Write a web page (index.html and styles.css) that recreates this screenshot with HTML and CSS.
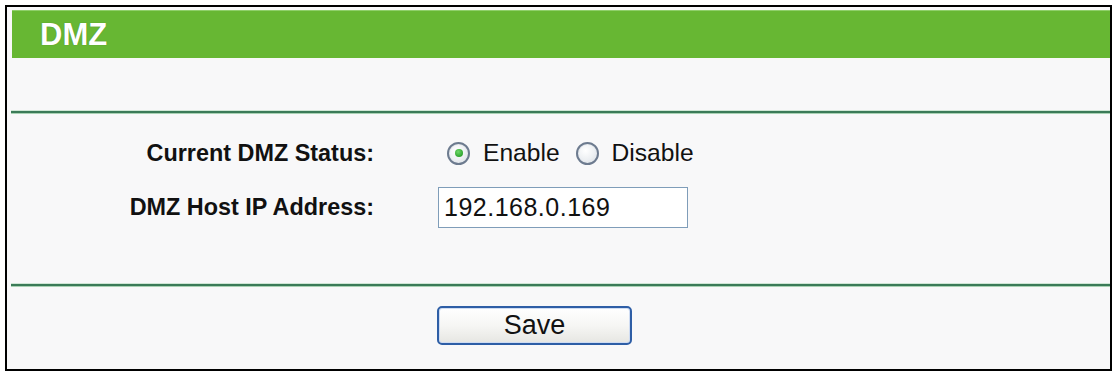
FILE: index.html
```html
<!DOCTYPE html>
<html>
<head>
<meta charset="utf-8">
<title>DMZ</title>
<link rel="stylesheet" href="styles.css">
</head>
<body>
<div class="frame">
  <div class="title">DMZ</div>
  <div class="spacer"></div>
  <div class="rule"></div>
  <div class="form">
    <div class="row row-status">
      <div class="label">Current DMZ Status:</div>
      <div class="value radios">
        <span class="radio checked"></span><span class="opt">Enable</span>
        <span class="radio"></span><span class="opt">Disable</span>
      </div>
    </div>
    <div class="row row-ip">
      <div class="label">DMZ Host IP Address:</div>
      <div class="value">
        <div class="ipbox">192.168.0.169</div>
      </div>
    </div>
  </div>
  <div class="rule"></div>
  <div class="actions">
    <div class="label"></div>
    <div class="value"><div class="btn">Save</div></div>
  </div>
</div>
</body>
</html>
```
FILE: styles.css
```css
html, body {
  margin: 0;
  padding: 0;
  background: #ffffff;
}
body {
  font-family: "Liberation Sans", Arial, sans-serif;
  color: #111;
}
.frame {
  box-sizing: border-box;
  margin: 5px 0 0 5px;
  width: 1107px;
  height: 366px;
  border: 2px solid #000;
  background: #f8f8f9;
  padding: 3px 0 0 4px;
}
.title {
  margin-left: 1px;
  height: 48px;
  line-height: 48px;
  background: #67b733;
  border-top: 1px solid #8fcf6a;
  box-sizing: border-box;
  color: #fff;
  font-weight: bold;
  font-size: 31px;
  padding-left: 28px;
  text-shadow: 0 0 1px rgba(40,80,20,0.5);
}
.spacer {
  height: 53px;
}
.rule {
  height: 2px;
  background: #3b7b58;
  box-shadow: 0 1px 0 #a9d2b4, 0 -1px 0 #cfe6d5;
}
.form {
  padding: 23px 0 56px;
  display: flex;
  flex-direction: column;
  gap: 17px;
}
.row, .actions {
  display: grid;
  grid-template-columns: 363px 1fr;
  column-gap: 64px;
  align-items: center;
}
.row-status { height: 34px; }
.row-ip { height: 41px; }
.label {
  text-align: right;
  font-weight: bold;
  font-size: 23.4px;
}
.radios {
  display: flex;
  align-items: center;
  font-size: 24.6px;
}
.radio {
  box-sizing: border-box;
  width: 23px;
  height: 23px;
  border-radius: 50%;
  border: 2px solid #6d7b8f;
  background: radial-gradient(circle at 40% 35%, #ffffff 0%, #eceff2 55%, #d4d8dd 100%);
  box-shadow: inset 0 0 0 1px #e6eaef;
  position: relative;
  flex: none;
}
.radio:first-child { margin-left: 9px; }
.radio.checked::after {
  content: "";
  position: absolute;
  left: 5.5px;
  top: 5.5px;
  width: 8px;
  height: 8px;
  border-radius: 50%;
  background: radial-gradient(circle at 40% 35%, #6fd86a 0%, #2fa52f 70%, #258a25 100%);
}
.opt {
  margin-left: 13px;
  margin-right: 16px;
}
.ipbox {
  box-sizing: border-box;
  width: 250px;
  height: 41px;
  border: 1px solid #7f9db9;
  background: #fff;
  font-size: 25px;
  letter-spacing: 0.5px;
  line-height: 39px;
  padding-left: 5px;
}
.actions {
  padding-top: 20px;
  column-gap: 63px;
}
.btn {
  box-sizing: border-box;
  width: 195px;
  height: 39px;
  border: 2px solid #2e5ea6;
  border-radius: 5px;
  background: linear-gradient(#ffffff 0%, #f6f6f4 50%, #e6e6e2 100%);
  box-shadow: inset 0 0 0 1px #cfdcf2;
  text-align: center;
  font-size: 27px;
  line-height: 35px;
  color: #111;
}
```
